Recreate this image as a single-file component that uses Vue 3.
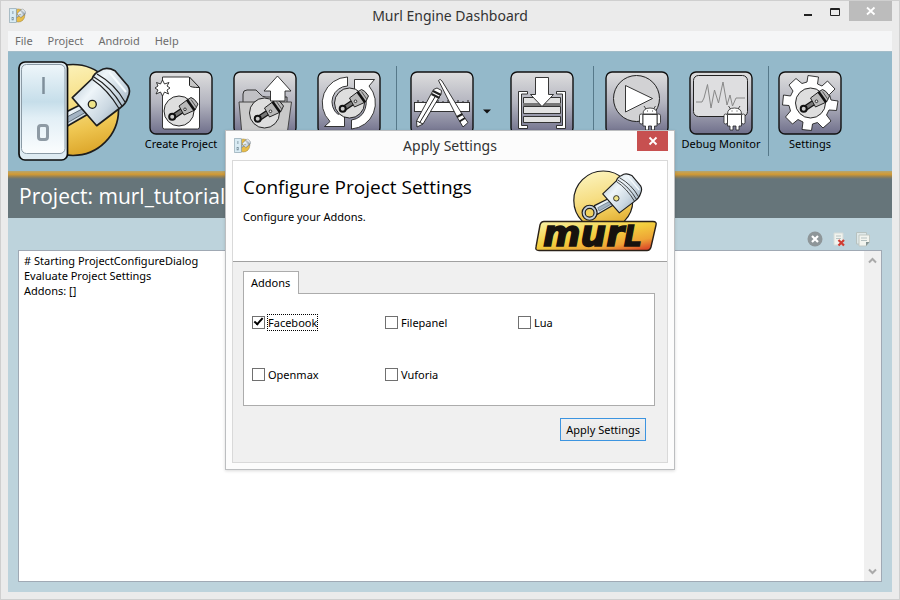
<script setup>
import { ref } from 'vue'

const menus = ['File', 'Project', 'Android', 'Help']
const addons = ref([
  { name: 'Facebook', on: true },
  { name: 'Filepanel', on: false },
  { name: 'Lua', on: false },
  { name: 'Openmax', on: false },
  { name: 'Vuforia', on: false }
])
const log = ref('# Starting ProjectConfigureDialog\nEvaluate Project Settings\nAddons: []')
</script>

<template>
  <svg class="defs" aria-hidden="true">
    <defs>
      <linearGradient id="gold" x1="0.4" y1="0.05" x2="0.65" y2="1">
        <stop offset="0" stop-color="#fbf0b4" />
        <stop offset="0.4" stop-color="#f6de84" />
        <stop offset="0.7" stop-color="#eec550" />
        <stop offset="1" stop-color="#dba428" />
      </linearGradient>
      <linearGradient id="steel" x1="0" y1="0" x2="1" y2="0.8">
        <stop offset="0" stop-color="#a3b7c5" />
        <stop offset="0.4" stop-color="#eef5f9" />
        <stop offset="0.7" stop-color="#cbd8e2" />
        <stop offset="1" stop-color="#93a6b6" />
      </linearGradient>
      <linearGradient id="switch" x1="0" y1="0" x2="0" y2="1">
        <stop offset="0" stop-color="#eef6fa" />
        <stop offset="0.42" stop-color="#c6deea" />
        <stop offset="0.6" stop-color="#e2eff6" />
        <stop offset="1" stop-color="#fbfdfe" />
      </linearGradient>
      <linearGradient id="tile" x1="0" y1="0" x2="0" y2="1">
        <stop offset="0" stop-color="#dedede" />
        <stop offset="0.5" stop-color="#b3b4bf" />
        <stop offset="1" stop-color="#6f6f8b" />
      </linearGradient>
      <linearGradient id="plate" x1="0" y1="0" x2="0.85" y2="1">
        <stop offset="0" stop-color="#f9f2a8" />
        <stop offset="0.5" stop-color="#f3cf3e" />
        <stop offset="0.8" stop-color="#eea436" />
        <stop offset="1" stop-color="#dc4a28" />
      </linearGradient>
      <g id="piston" stroke="#1d1d1d" stroke-width="1.700" stroke-linejoin="round">
        <path d="M42 54 L66 42 L72 52 L46 67 Z" fill="url(#steel)" />
        <path d="M47 57 L66 47 L68 51 L49 62 Z" fill="#a4b4c4" stroke="#60707c" stroke-width="1" />
        <circle cx="35" cy="64.5" r="11" fill="#c3cfda" />
        <circle cx="35" cy="64.5" r="6.5" fill="#f1d260" />
        <path d="M54.3 36.7 L74.3 17.5 Q76 12 82 9.7 Q88 5 97 9.7 L110 25 Q113 30 110 36 Q108 43 102 47 L78.7 64.7 Z" fill="url(#steel)" />
        <path d="M76 16 Q93 26 104 45 M79 13 Q97 23 107 41 M74.5 18.5 Q90 29 101 47.5" fill="none" stroke-width="1.2" />
        <path d="M91 11 L108 31" fill="none" stroke="#f4fafd" stroke-width="2" />
        <circle cx="74.3" cy="43.3" r="4" fill="#efe489" stroke-width="1.3" />
      </g>
      <g id="badge" stroke="#111" stroke-linejoin="round">
        <circle r="15" fill="#dedede" stroke-width="0.9" />
        <path d="M-6 3 L3 -3 L5 1 L-4 7 Z" fill="#777" stroke-width="1.3" />
        <circle cx="-6.8" cy="5.8" r="3" fill="#ccc" stroke-width="2" />
        <path d="M0 -5 L8 -11 L12 -13.5 Q15 -13 19 -7 L16 -1 L5 4 Z" fill="#b9b9b9" stroke-width="0.9" />
        <path d="M8 -11.2 L15.5 -0.8" stroke-width="2.6" />
        <path d="M12 -11.5 L17.5 -3.5" stroke="#555" stroke-width="1" />
        <circle cx="6" cy="-1.7" r="1.3" fill="#eee" stroke-width="0.8" />
      </g>
      <g id="droid" fill="#fff" stroke="#222" stroke-width="0.8">
        <path d="M39 35 L41 38 M50.500 35 L48.500 38" />
        <path d="M38 43 Q38 37 45 37 Q52 37 52 43 Z" />
        <rect x="34.500" y="43" width="3.500" height="10" rx="1.700" />
        <rect x="52" y="43" width="3.500" height="10" rx="1.700" />
        <path d="M38 43.500 H52 V55 H49.500 V59 H46.500 V55 H43.500 V59 H40.500 V55 H38 Z" />
        <path d="M42 40 h1 M47 40 h1" />
      </g>
      <symbol id="app-icon" viewBox="0 0 114 100">
        <circle cx="62" cy="50" r="44" fill="#e9bd48" stroke="#8a7a45" stroke-width="3" />
        <use href="#piston" />
        <rect x="2" y="2" width="48" height="96" rx="6" fill="#d9ebf3" stroke="#6e8794" stroke-width="4" />
        <path d="M26 20 V40" stroke="#6e8794" stroke-width="5" />
        <rect x="20" y="64" width="11" height="16" fill="none" stroke="#6e8794" stroke-width="4" />
      </symbol>
    </defs>
  </svg>

  <main class="window">
    <header class="titlebar">
      <svg class="app-icon" viewBox="0 0 114 100"><use href="#app-icon" /></svg>
      <h1>Murl Engine Dashboard</h1>
      <div class="controls">
        <button class="ctl" aria-label="Minimize"><svg width="12" height="16"><rect x="2" y="13" width="8" height="2" fill="#222" /></svg></button>
        <button class="ctl max" aria-label="Maximize"><svg width="12" height="16"><path d="M1.500 7.500 H10.500 V14.500 H1.500 Z M1 8.500 H11" fill="none" stroke="#222" /></svg></button>
        <button class="ctl close" aria-label="Close"><svg width="10" height="10"><path d="M1 1.500 L8.500 8.500 M8.500 1.500 L1 8.500" stroke="#fff" stroke-width="1.800" /></svg></button>
      </div>
    </header>

    <nav class="menu">
      <button v-for="m in menus" :key="m">{{ m }}</button>
    </nav>

    <section class="toolbar">
      <svg class="brand" viewBox="0 0 114 100" aria-label="Murl">
        <circle cx="55" cy="49" r="45.500" fill="url(#gold)" stroke="#1d1d1d" stroke-width="1.700" />
        <use href="#piston" />
        <rect x="1" y="1" width="48.500" height="98" rx="6" fill="#dfebf2" stroke="#0c0c0c" stroke-width="1.700" />
        <rect x="3.500" y="3.500" width="43.500" height="89" rx="5" fill="url(#switch)" stroke="#8b9aa5" />
        <path d="M25.500 16 V33" stroke="#7f8f9b" stroke-width="2.500" />
        <rect x="20.500" y="64.500" width="9" height="14" rx="2.500" fill="none" stroke="#8e9aa4" stroke-width="3" />
      </svg>

      <button class="tool">
        <svg viewBox="0 0 64 64">
          <rect class="tile" x="1" y="1" width="62" height="62" rx="6" />
          <path class="w" d="M13.500 6 H40 L50.500 16.500 V56 Q50.500 58 48.500 58 H15.500 Q13.500 58 13.500 56 Z" />
          <path d="M40.500 6 V14.500 Q41 16.500 50.500 16.500 Z" fill="#c6c6c6" stroke="#222" />
          <path class="w" d="M13.500 9 L15.500 13 L20 11.500 L18 15 L21 17 L18 19 L19.500 23 L15.500 21 L13.500 25 L11.500 21 L7 23 L9 19 L6 17 L9 15 L7.500 11.500 L11.500 13 Z" />
          <use href="#badge" x="30" y="40" />
        </svg>
        <span>Create Project</span>
      </button>
      <button class="tool" aria-label="Open Project">
        <svg viewBox="0 0 64 64">
          <rect class="tile" x="1" y="1" width="62" height="62" rx="6" />
          <path d="M10 31 V23 Q10 19 14 19 H23 L27 23 Q29 26 33 26 H54 V31" fill="#c0c0c4" stroke="#333" />
          <path d="M6 31 H58.500 L54 64 H9 Z" fill="#c9c9c9" stroke="#444" />
          <use href="#badge" x="31.500" y="42" />
          <path class="w" d="M44.500 5 L58 20 H52 V30 H37.500 V20 H31 Z" />
        </svg>
      </button>
      <button class="tool" aria-label="Refresh">
        <svg viewBox="0 0 64 64">
          <rect class="tile" x="1" y="1" width="62" height="62" rx="6" />
          <path class="w" d="M30.500 6 A26 26 0 0 0 13 50.500 L7.500 55.500 H27.500 V38 L21 43.500 A16 16 0 0 1 30.500 15 Z" />
          <path class="w" d="M34.500 58 A26 26 0 0 0 52 15 L57.500 8.500 H37.500 V27 L44 20 A17 17 0 0 1 34.500 49 Z" />
          <use href="#badge" x="32.500" y="32" />
        </svg>
      </button>
      <i class="sep"></i>
      <div class="split">
        <button class="tool" aria-label="Build">
          <svg viewBox="0 0 64 64">
            <rect class="tile" x="1" y="1" width="62" height="62" rx="6" />
            <rect class="w" x="4.500" y="31.500" width="55" height="9" />
            <path d="M8 31 V29 M13 31 V30 M18 31 V29 M23 31 V30 M28 31 V29 M33 31 V30 M38 31 V29 M43 31 V30 M48 31 V29 M53 31 V30 M58 31 V29" stroke="#222" />
            <path class="w" d="M23.500 18.500 L27 17 L31.500 19.500 L31 23 L13 53 L7 56 L6.500 50 Z" />
            <path d="M23 20 L31 24 M21.500 23 L29.500 27" stroke="#222" stroke-width="2" />
            <path d="M25.500 25 L9.500 52 M7 50 L13 53" stroke="#222" fill="none" />
            <path class="w" d="M28.500 9.500 Q30 7 32 10 L52 43 L58 51.500 L53 56 L49.500 50 L47 46 Z" />
            <path d="M47 46 L52.500 43 M49.500 50.500 L55 47" stroke="#222" stroke-width="2" />
          </svg>
        </button>
        <button class="drop" aria-label="Build options"><svg width="8" height="5"><path d="M0 0.500 H8 L4 4.500 Z" fill="#111" /></svg></button>
      </div>
      <button class="tool" aria-label="Install">
        <svg viewBox="0 0 64 64">
          <rect class="tile" x="1" y="1" width="62" height="62" rx="6" />
          <path class="w" d="M8.500 20.500 H17.500 V23 H11.500 V54.500 H17.500 V57.500 H8.500 Z M55.500 20.500 H46.500 V23 H52.500 V54.500 H46.500 V57.500 H55.500 Z" />
          <path d="M13.500 26.500 H50.500 V32.500 H13.500 Z M13.500 35.500 H50.500 V42.500 H13.500 Z M13.500 45.500 H50.500 V51.500 H13.500 Z" fill="#e2e2e2" stroke="#333" />
          <rect x="13" y="32" width="38" height="3" fill="#777" />
          <path class="w" d="M25.500 6.500 H38.500 V23.500 H43.500 L32 35.500 L20.500 23.500 H25.500 Z" />
        </svg>
      </button>
      <i class="sep wide"></i>
      <button class="tool" aria-label="Run">
        <svg viewBox="0 0 64 64">
          <rect class="tile" x="1" y="1" width="62" height="62" rx="6" />
          <circle cx="31.500" cy="27.500" r="23" fill="#d2d2d4" stroke="#222" />
          <path class="w" d="M20.500 14.500 L47.500 27.500 L20.500 41 Z" />
          <use href="#droid" />
        </svg>
      </button>
      <button class="tool">
        <svg viewBox="0 0 64 64">
          <rect class="tile" x="1" y="1" width="62" height="62" rx="6" />
          <rect x="4.500" y="4.500" width="54" height="41" rx="5" fill="#dedee0" stroke="#222" />
          <path d="M7 31 H13 L15 27 L18.500 13.500 L22 37 L25.500 19 L29.500 32 L34 11 L38 34 L41 24 L43.500 35 L47 27 H56" fill="none" stroke="#888" />
          <use href="#droid" x="0.500" />
        </svg>
        <span>Debug Monitor</span>
      </button>
      <i class="sep"></i>
      <button class="tool end">
        <svg viewBox="0 0 64 64">
          <rect class="tile" x="1" y="1" width="62" height="62" rx="6" />
          <path class="w" d="M30 4.500 L40.500 6 L39.500 13 L44 15 L49.500 10 L57 18 L51.500 23.500 L53 29 L60 30 L58.500 39.500 L51 39 L48.500 44 L53 50 L45 57 L39.500 51.500 L34.500 53 L33.500 59.500 L24 58.500 L25 51 L20 48.500 L14.500 53 L7.500 46 L12.500 40 L11 34.500 L4.500 34 L5.500 24 L12.500 25 L15 20 L11 14 L18 7.500 L24 12.500 L29 11 Z" />
          <use href="#badge" x="32.500" y="32" />
        </svg>
        <span>Settings</span>
      </button>
    </section>

    <div class="stripe"></div>
    <h2 class="project">Project: murl_tutorial</h2>

    <section class="console">
      <div class="actions">
        <button aria-label="Stop"><svg width="16" height="16"><circle cx="8" cy="8" r="7.500" fill="#8e9699" /><path d="M5 5 L11 11 M11 5 L5 11" stroke="#fff" stroke-width="2.200" /></svg></button>
        <button aria-label="Clear"><svg width="16" height="16"><path d="M3 2 H12 V14 H3 Z" fill="#f1f3ee" stroke="#d5dbd8" /><path d="M5 5 H10 M5 7.500 H10" stroke="#b9c4c4" /><path d="M7.500 9 L13 14.500 M13 9 L7.500 14.500" stroke="#cf3c33" stroke-width="2.200" /></svg></button>
        <button aria-label="Copy"><svg width="16" height="16"><path d="M1.500 1.500 H11.500 V13 H1.500 Z" fill="#dfe8e8" stroke="#b7c2c0" /><path d="M4 4 H14.500 V11 L11 15 H4 Z" fill="#f2f4ef" stroke="#c0c8c4" /><path d="M6 7 H12 M6 9.500 H12" stroke="#b5c1c1" /><path d="M14.500 11 L11 15 V11 Z" fill="#839393" /></svg></button>
      </div>
      <div class="log">
        <textarea v-model="log" readonly aria-label="Log output"></textarea>
        <div class="scroll">
          <button aria-label="Scroll up"><svg width="9" height="7"><path d="M1 5.500 L4.500 2 L8 5.500" fill="none" stroke="#a9a9a9" stroke-width="2" /></svg></button>
          <button aria-label="Scroll down"><svg width="9" height="7"><path d="M1 1.500 L4.500 5 L8 1.500" fill="none" stroke="#a9a9a9" stroke-width="2" /></svg></button>
        </div>
      </div>
    </section>

    <section class="dialog" role="dialog" aria-labelledby="dialog-title">
      <header class="dialog-title">
        <svg class="app-icon" viewBox="0 0 114 100"><use href="#app-icon" /></svg>
        <h2 id="dialog-title">Apply Settings</h2>
        <button class="dialog-close" aria-label="Close dialog"><svg width="10" height="10"><path d="M1.500 1.500 L8.500 8.500 M8.500 1.500 L1.500 8.500" stroke="#fff" stroke-width="1.800" /></svg></button>
      </header>
      <div class="frame">
        <div class="intro">
          <div>
            <h3>Configure Project Settings</h3>
            <p>Configure your Addons.</p>
          </div>
          <svg class="logo" viewBox="0 0 122 82">
            <circle cx="68.300" cy="30.500" r="29.500" fill="url(#gold)" stroke="#1d1d1d" stroke-width="1.200" />
            <use href="#piston" transform="translate(30.800 -1.100) scale(0.680)" />
            <path d="M9 51.500 H118 Q122 51.500 121 55 L116 77 Q115 80.500 112 80.500 H4 Q0 80.500 1 77 L5 55 Q6 51.500 9 51.500 Z" fill="url(#plate)" stroke="#2a2118" stroke-width="1.400" />
            <text x="8" y="76" class="wordmark">mur<tspan class="cap">L</tspan></text>
          </svg>
        </div>
        <form class="body" @submit.prevent>
          <div class="tabs"><button type="button" class="tab">Addons</button></div>
          <div class="panel">
            <label v-for="a in addons" :key="a.name">
              <input v-model="a.on" type="checkbox" />
              <span :class="{ focused: a.name === 'Facebook' }">{{ a.name }}</span>
            </label>
          </div>
          <div class="foot"><button class="apply">Apply Settings</button></div>
        </form>
      </div>
    </section>
  </main>
</template>

<style>
body {
  margin: 0;
}
</style>

<style scoped>
.defs {
  position: absolute;
  width: 0;
  height: 0;
}
.window {
  position: relative;
  box-sizing: border-box;
  min-height: 100vh;
  display: flex;
  flex-direction: column;
  padding: 0 7px 7px;
  border: 1px solid #cfcfcf;
  background: #ebebeb;
  font-family: "Noto Sans", "Open Sans", sans-serif;
  font-size: 11px;
  line-height: 15px;
  color: #000;
}
h1, h2, h3, p {
  margin: 0;
  font-weight: 400;
}
button {
  padding: 0;
  border: 0;
  background: none;
  font: inherit;
  color: inherit;
}
svg {
  display: block;
}
.titlebar {
  display: grid;
  grid-template-columns: 1fr auto 1fr;
  height: 30px;
}
.titlebar h1 {
  font-size: 14px;
  line-height: 30px;
  color: #333;
}
.app-icon {
  width: 17px;
  height: 15px;
  margin: 7px 0 0 1px;
}
.controls {
  display: flex;
  justify-content: flex-end;
  align-items: flex-start;
}
.ctl {
  width: 12px;
  margin-right: 15px;
}
.ctl.max {
  margin-right: 8px;
}
.ctl.close {
  width: 43px;
  height: 20px;
  margin: 0;
  background: #bcbcbc;
}
.close svg,
.dialog-close svg {
  margin: 0 auto;
}
.menu {
  display: flex;
  align-items: flex-start;
  gap: 15px;
  height: 20px;
  padding: 0 7px;
  background: #f5f6f7;
  color: #6d6d6d;
}
.menu button {
  height: 19px;
}
.toolbar {
  display: flex;
  align-items: flex-start;
  gap: 6px;
  height: 110px;
  padding: 9px 10px 0;
  background: #94b9ca;
  border-top: 1px solid #a3bdc9;
}
.brand {
  width: 114px;
  height: 100px;
  margin-right: 4px;
  flex: none;
}
.tool {
  display: flex;
  flex-direction: column;
  align-items: center;
  width: 78px;
  gap: 1px;
  padding-top: 10px;
  white-space: nowrap;
}
.tool.end {
  width: 70px;
}
.tool svg {
  width: 64px;
  height: 64px;
}
.tile {
  fill: url(#tile);
  stroke: #111;
  stroke-width: 1.4;
}
.w {
  fill: #fff;
  stroke: #222;
  stroke-width: 0.9;
}
.sep {
  width: 1px;
  height: 90px;
  margin: 5px 0 0 2px;
  background: #56798a;
}
.sep.wide {
  margin-left: 6px;
  margin-right: -2px;
}
.split {
  display: flex;
  align-items: flex-start;
}
.drop {
  width: 16px;
  padding: 48px 0 0 2px;
}
.stripe {
  height: 8px;
  background: linear-gradient(#b5a66f, #d39a33 40%, #8f7f57 75%, #66757a);
}
.project {
  height: 39px;
  padding-left: 11px;
  background: #66757a;
  color: #fff;
  font-family: "Open Sans", "Noto Sans", sans-serif;
  font-size: 21px;
  line-height: 35px;
}
.console {
  flex: 1;
  display: flex;
  flex-direction: column;
  padding: 13px 10px 10px;
  background: #bdd3dc;
}
.actions {
  display: flex;
  justify-content: flex-end;
  align-items: flex-start;
  gap: 8px;
  height: 19px;
  padding-right: 11px;
}
.log {
  flex: 1;
  display: flex;
  border: 1px solid #a0a9b4;
  background: #fff;
}
textarea {
  flex: 1;
  padding: 2px 5px;
  border: 0;
  outline: 0;
  resize: none;
  background: transparent;
  font: inherit;
}
.scroll {
  display: flex;
  flex-direction: column;
  justify-content: space-between;
  width: 17px;
  padding: 6px 0;
  background: #f0f0f0;
}
.scroll svg {
  margin: 0 auto;
}
.dialog {
  position: absolute;
  top: 129px;
  left: 50%;
  transform: translateX(-50%);
  box-sizing: border-box;
  width: 450px;
  padding: 0 6px 6px;
  border: 1px solid #bcbec0;
  background: #fcfcfc;
  box-shadow: 0 1px 3px rgba(0, 0, 0, 0.15);
}
.dialog-title {
  display: grid;
  grid-template-columns: 1fr auto 1fr;
  height: 29px;
}
.dialog-title .app-icon {
  margin: 7px 0 0 2px;
}
.dialog-title h2 {
  font-size: 14px;
  line-height: 30px;
  color: #333;
}
.dialog-close {
  justify-self: end;
  width: 31px;
  height: 20px;
  background: #c75050;
}
.frame {
  border: 1px solid #d9d9d9;
  background: #f0f0f0;
}
.intro {
  display: flex;
  justify-content: space-between;
  height: 100px;
  padding: 0 10px;
  border-bottom: 1px solid #a0a0a0;
  background: #fff;
}
.intro h3 {
  padding-top: 12px;
  font-family: "Open Sans", "Noto Sans", sans-serif;
  font-size: 19px;
  line-height: 28px;
}
.intro p {
  padding-top: 8px;
}
.logo {
  width: 122px;
  height: 82px;
  margin-top: 9px;
  overflow: visible;
}
.wordmark {
  fill: #16120e;
  stroke: #16120e;
  stroke-width: 1.5;
  font: italic 700 36px "DejaVu Sans", sans-serif;
}
.cap {
  font-size: 28px;
}
.body {
  padding: 9px 12px 21px 10px;
}
.tabs {
  display: flex;
}
.tab {
  height: 23px;
  padding: 0 8px 2px 7px;
  margin-bottom: -1px;
  border: 1px solid #acacac;
  border-bottom: 0;
  background: #fff;
}
.panel {
  display: grid;
  grid-template-columns: repeat(3, 133px);
  grid-auto-rows: 52px;
  height: 109px;
  padding: 2px 8px 0;
  border: 1px solid #acacac;
  background: #fff;
}
.panel label {
  display: flex;
  align-items: center;
  gap: 2px;
}
.panel input {
  appearance: none;
  display: grid;
  place-items: center;
  width: 13px;
  height: 13px;
  margin: 0;
  border: 1px solid #707070;
  background: #fff;
}
.panel input:checked::before {
  content: "";
  width: 9px;
  height: 5px;
  margin-bottom: 3px;
  box-sizing: border-box;
  border: solid #000;
  border-width: 0 0 2px 2px;
  transform: rotate(-48deg);
}
.panel span {
  border: 1px dotted transparent;
}
.panel .focused {
  border-color: #000;
}
.foot {
  display: flex;
  justify-content: flex-end;
  padding: 12px 9px 0 0;
}
.apply {
  height: 23px;
  padding: 0 5px;
  border: 1px solid #3c94e0;
  background: linear-gradient(#f0f0f0, #e5e5e5);
}
</style>
